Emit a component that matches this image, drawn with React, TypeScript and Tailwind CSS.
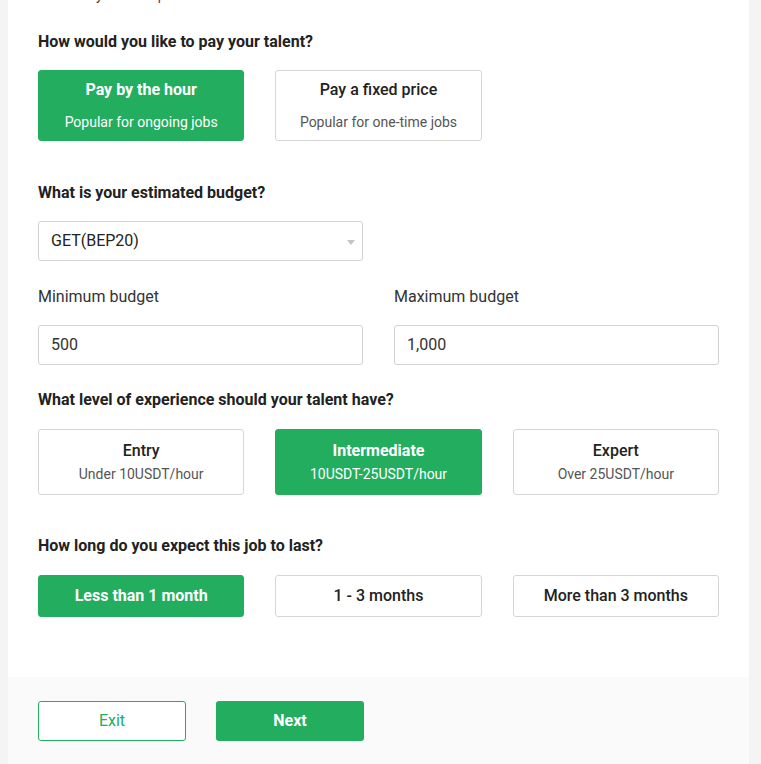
import { useState } from 'react';

const GREEN = 'bg-[#22ad5f]';

type Option = { title: string; sub?: string };

function OptionBox({ opt, active, tall, onClick }: { opt: Option; active: boolean; tall: string; onClick: () => void }) {
  return (
    <button
      onClick={onClick}
      className={`${tall} w-full flex flex-col items-center justify-center rounded-[3px] border ${
        active ? `${GREEN} border-[#22ad5f] text-white` : 'bg-white border-[#d6d6d6] text-[#222]'
      }`}
    >
      <span className={`text-[16px] leading-[20px] ${active ? 'font-bold' : 'font-medium'}`}>{opt.title}</span>
      {opt.sub && (
        <span className={`text-[14px] leading-[18px] ${active ? 'text-white' : 'text-[#555]'}`}>{opt.sub}</span>
      )}
    </button>
  );
}

export default function App() {
  const [pay, setPay] = useState(0);
  const [level, setLevel] = useState(1);
  const [duration, setDuration] = useState(0);

  const payOptions: Option[] = [
    { title: 'Pay by the hour', sub: 'Popular for ongoing jobs' },
    { title: 'Pay a fixed price', sub: 'Popular for one-time jobs' },
  ];
  const levels: Option[] = [
    { title: 'Entry', sub: 'Under 10USDT/hour' },
    { title: 'Intermediate', sub: '10USDT-25USDT/hour' },
    { title: 'Expert', sub: 'Over 25USDT/hour' },
  ];
  const durations: Option[] = [{ title: 'Less than 1 month' }, { title: '1 - 3 months' }, { title: 'More than 3 months' }];

  return (
    <div className="min-h-[764px] bg-[#f4f4f4] pl-[8px] pr-[12px] overflow-hidden" style={{ fontFamily: 'Roboto, "Liberation Sans", sans-serif' }}>
      <div className="bg-white min-h-[764px] flex flex-col">
        <div className="px-[30px] pb-[60px]">
          {/* previous section, scrolled away */}
          <p className="-mt-[14px] text-[14px] leading-[18px] text-[#333]">
            Describe your item <span className="text-[#a0157a]">preview</span>
          </p>

          <h3 className="mt-[29px] text-[16px] leading-[18px] font-bold text-[#222]">How would you like to pay your talent?</h3>
          <div className="mt-[19px] grid grid-cols-3 gap-[31px]">
            {payOptions.map((o, i) => (
              <div key={o.title} className="[&>button]:gap-[13px]">
                <OptionBox opt={o} active={pay === i} tall="h-[71px]" onClick={() => setPay(i)} />
              </div>
            ))}
          </div>

          <h3 className="mt-[43px] text-[16px] leading-[18px] font-bold text-[#222]">What is your estimated budget?</h3>
          <div className="mt-[19px] grid grid-cols-2 gap-[31px]">
            <div className="relative h-[40px] rounded-[3px] border border-[#cfd3d6] flex items-center px-[12px] text-[16px] text-[#222]">
              GET(BEP20)
              <span className="absolute right-[7px] top-[18px] w-0 h-0 border-x-[4px] border-x-transparent border-t-[5px] border-t-[#c4c4c4]" />
            </div>
          </div>

          <div className="mt-[27px] grid grid-cols-2 gap-[31px]">
            <div>
              <div className="text-[16px] leading-[18px] text-[#333]">Minimum budget</div>
              <div className="mt-[19px] h-[40px] rounded-[3px] border border-[#cfd3d6] flex items-center px-[12px] text-[16px] text-[#333]">500</div>
            </div>
            <div>
              <div className="text-[16px] leading-[18px] text-[#333]">Maximum budget</div>
              <div className="mt-[19px] h-[40px] rounded-[3px] border border-[#cfd3d6] flex items-center px-[12px] text-[16px] text-[#333]">1,000</div>
            </div>
          </div>

          <h3 className="mt-[26px] text-[16px] leading-[18px] font-bold text-[#222]">What level of experience should your talent have?</h3>
          <div className="mt-[20px] grid grid-cols-3 gap-[31px]">
            {levels.map((o, i) => (
              <div key={o.title} className="[&>button]:gap-[4px]">
                <OptionBox opt={o} active={level === i} tall="h-[66px]" onClick={() => setLevel(i)} />
              </div>
            ))}
          </div>

          <h3 className="mt-[42px] text-[16px] leading-[18px] font-bold text-[#222]">How long do you expect this job to last?</h3>
          <div className="mt-[20px] grid grid-cols-3 gap-[31px]">
            {durations.map((o, i) => (
              <OptionBox key={o.title} opt={o} active={duration === i} tall="h-[42px]" onClick={() => setDuration(i)} />
            ))}
          </div>
        </div>

        <div className="flex-1 bg-[#fafafa] px-[30px] pt-[24px] flex gap-[30px] items-start">
          <button className="w-[148px] h-[40px] rounded-[3px] border border-[#22ad5f] bg-white text-[#22ad5f] text-[16px]">Exit</button>
          <button className={`w-[148px] h-[40px] rounded-[3px] ${GREEN} text-white text-[16px] font-bold`}>Next</button>
        </div>
      </div>
    </div>
  );
}
